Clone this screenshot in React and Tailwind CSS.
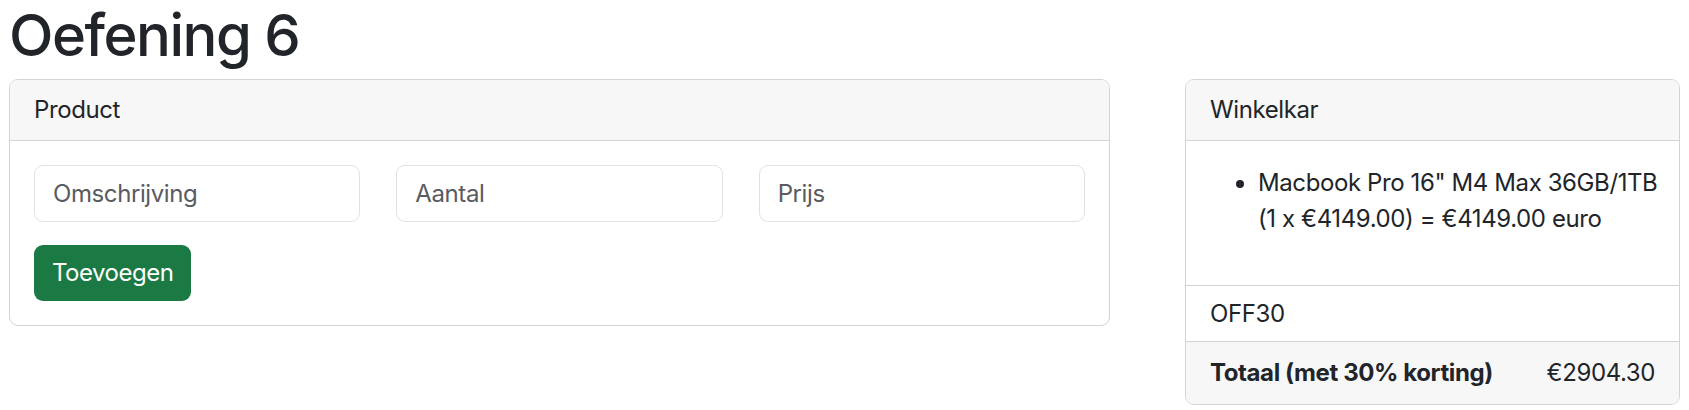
export default function App() {
    return (
        <div className="min-h-screen bg-white px-[9px] font-['Inter','Noto_Sans',sans-serif] text-[24px] leading-[36px] tracking-[-0.4px] text-[#212529]">
            <h1 className="text-[58px] leading-[70px] font-medium tracking-[-1.5px] mb-[9px]">Oefening 6</h1>

            <div className="flex items-start justify-between">
                {/* Product card */}
                <div className="w-[1101px] rounded-[9px] border border-[#d3d3d3] overflow-hidden">
                    <div className="bg-[#f7f7f7] border-b border-[#d3d3d3] px-6 py-3 h-[61px]">Product</div>
                    <div className="p-6">
                        <div className="grid grid-cols-3 gap-x-9">
                            <input
                                placeholder="Omschrijving"
                                className="h-[57px] w-full rounded-[9px] border border-[#dee2e6] px-[18px] tracking-[-0.4px] outline-none placeholder:text-[#585b5f]"
                            />
                            <input
                                placeholder="Aantal"
                                className="h-[57px] w-full rounded-[9px] border border-[#dee2e6] px-[18px] tracking-[-0.4px] outline-none placeholder:text-[#585b5f]"
                            />
                            <input
                                placeholder="Prijs"
                                className="h-[57px] w-full rounded-[9px] border border-[#dee2e6] px-[18px] tracking-[-0.4px] outline-none placeholder:text-[#585b5f]"
                            />
                        </div>
                        <button className="mt-[23px] h-[56px] rounded-[9px] bg-[#1b7a44] px-[18px] tracking-[-0.5px] text-white">
                            Toevoegen
                        </button>
                    </div>
                </div>

                {/* Winkelkar card */}
                <div className="w-[495px] rounded-[9px] border border-[#d3d3d3] overflow-hidden">
                    <div className="bg-[#f7f7f7] border-b border-[#d3d3d3] px-6 py-3 h-[61px]">Winkelkar</div>
                    <div className="p-6">
                        <ul className="list-disc pl-12 mb-6">
                            <li>
                                <span className="whitespace-nowrap">Macbook Pro 16" M4 Max 36GB/1TB</span>
                                <br />
                                <span className="whitespace-nowrap">(1 x €4149.00) = €4149.00 euro</span>
                            </li>
                        </ul>
                    </div>
                    <input
                        defaultValue="OFF30"
                        className="block h-[57px] w-full border-y border-[#d3d3d3] px-6 tracking-[-0.4px] text-[#212529] outline-none"
                    />
                    <div className="flex h-[62px] items-center justify-between bg-[#f7f7f7] px-6">
                        <span className="font-bold">Totaal (met 30% korting)</span>
                        <span>€2904.30</span>
                    </div>
                </div>
            </div>
        </div>
    );
}
